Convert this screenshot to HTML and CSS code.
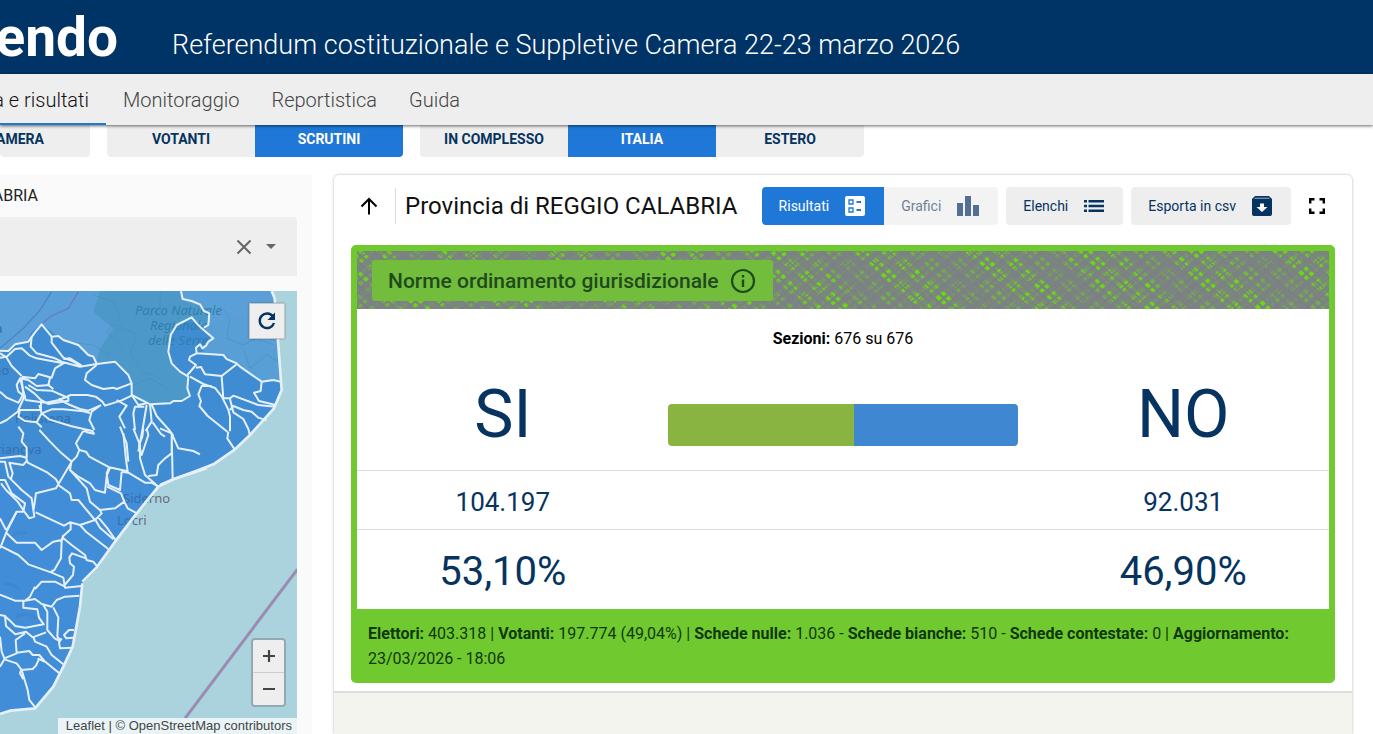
FILE: index.html
```html
<!DOCTYPE html>
<html lang="it">
<head>
<meta charset="utf-8">
<title>Eligendo</title>
<link rel="stylesheet" href="styles.css">
</head>
<body>
<header class="top">
  <div class="logo">endo</div>
  <h1 class="top-title">Referendum costituzionale e Suppletive Camera 22-23 marzo 2026</h1>
</header>
<nav class="nav">
  <a class="nav-link nav-first active" href="#">a e risultati</a>
  <a class="nav-link" href="#">Monitoraggio</a>
  <a class="nav-link" href="#">Reportistica</a>
  <a class="nav-link" href="#">Guida</a>
</nav>
<div class="filters">
  <div class="group"><button class="tab tab-cut">CAMERA</button></div>
  <div class="group"><button class="tab">VOTANTI</button><button class="tab on">SCRUTINI</button></div>
  <div class="group"><button class="tab">IN COMPLESSO</button><button class="tab on">ITALIA</button><button class="tab">ESTERO</button></div>
</div>
<main class="main">
  <aside class="side">
    <div class="crumb">CALABRIA</div>
    <div class="picker">
      <button class="icon-btn" aria-label="Cancella"><svg width="16" height="16" viewBox="0 0 16 16"><path d="M1.500 1.500l13 13M14.500 1.500l-13 13" stroke="#666" stroke-width="2"/></svg></button>
      <button class="icon-btn" aria-label="Apri"><svg width="10" height="5" viewBox="0 0 10 5"><path d="M0 0h10L5 5z" fill="#666"/></svg></button>
    </div>
    <div class="map">
      <svg class="map-art" width="297" height="443" viewBox="0 0 297 443">
        <rect width="297" height="443" fill="#abd3de"/>
        <g transform="translate(0 -6) scale(.33333)" fill="none" stroke-linejoin="round">
          <path fill="#5b9fd8" d="M0 18H815L822 40 835 180 843 285 600 400H0z"/>
          <path fill="#4c99c9" d="M300 18H545L550 45 620 70 625 120 570 97 525 130 505 180 520 240 565 275 570 330 540 350 440 355 395 330 390 280 345 230 290 236 300 190 340 130 280 80z"/>
          <path fill="#579fd4" d="M620 125L680 100 745 95 790 180 835 200 838 285 785 287 710 235 670 208 600 208 640 160z"/>
          <g stroke="#4488bd" stroke-width="3" opacity=".5"><path d="M280 30l60 20 20 50-40 40 50 50M350 120l60 30-20 60 40 50 50 20M480 20v50l-50 40M660 60l30 40-10 60 50 20 40-20 50 20M730 190l20 60 50-40 35 20M400 300l50-20 50 30M190 170l90 10 50 30"/></g>
          <path stroke="#4479b8" stroke-width="4" opacity=".7" d="M155 20L120 75 70 130 0 190"/>
          <path stroke="#6a70b8" stroke-width="4" opacity=".7" d="M235 20L205 70 150 95 125 118"/>
          <path fill="#3f8cd3" d="M0 205L25 195 45 175 80 172 95 140 125 117 175 155 235 185 280 215 290 237 345 230 385 270 395 295 395 330 440 353 510 355 545 348 570 330 562 275 515 235 505 180 525 125 575 97 640 160 610 180 610 208 670 208 710 235 785 287 840 287 845 315 822 370 750 450 705 493 640 538 590 557 520 583 480 600 440 645 395 690H0z"/>
        </g>
        <g transform="translate(0 209) scale(.33333)">
          <path fill="#428dd8" d="M0-60H480L445 0 410 40 345 125 290 207 247 250 240 320 218 440 190 500 160 560 105 625 30 632 0 642z"/>
          <path d="M892 208L555 655" stroke="#9b8bb2" stroke-width="9"/>
          <path d="M20 120q30-30 60-20M50 350q30-15 60 5M10 250q30 0 50 20" stroke="#367fbd" fill="none" stroke-width="8" opacity=".4"/>
        </g>
        <g class="places">
          <text x="135" y="24">Parco Naturale</text><text x="150" y="39">Regionale</text><text x="148" y="54">delle Serre</text>
        </g>
        <g class="towns">
          <text x="15" y="132">Polistena</text><text x="-12" y="163">urianova</text><text x="-8" y="42">ia</text><text x="-12" y="84">rno</text>
          <text x="123" y="212">Sider<tspan class="sea">no</tspan></text><text x="117" y="234">Loc<tspan class="sea">ri</tspan></text>
        </g>
        <g transform="translate(0 -6) scale(.33333)" class="borders">
          <path d="M543 18L548 42 575 48 600 58 612 78 628 85 625 120 612 128"/>
          <path class="coast" d="M815 18L824 40 835 180 843 287 845 315 822 370 750 450 705 493 640 538 590 557 520 583 480 600"/>
          <path d="M0 197L25 198 45 178 85 170 105 142 125 118 155 155 175 153 190 165 235 180 265 210 280 215 290 237 345 230 365 250 385 270 395 295 395 330 440 353 450 358 510 355 520 348 545 348 570 333 562 310 565 275 540 260 515 235 505 200 512 150 530 120 575 97 590 115 605 130 640 160 625 170 618 182 607 190 600 178 588 188 590 205 670 210 680 222 710 235 720 245 785 290 820 285 842 290"/>
          <path d="M95 155L92 185 110 205 165 220 185 230 240 245 290 237M0 218L20 215 45 192 65 190 90 212 110 220 190 235M155 155l0 18 35 45 30 12 25 15M190 222l20-2 35 22M20 218l15 25 30 30M0 205l20 12"/>
          <path d="M65 275L105 280 115 267 155 278 165 250 190 235M150 278L145 300 160 312M150 300L110 303 85 285 60 280 50 300 55 320 75 335M290 240L260 265 255 285 275 300 310 312 340 308 350 312 395 295M85 300l25 15 45 2 50 22 0 8-60 10-22-12-20-20-28-20M60 280l12 45 5 20 60 8 40-8 35-15 50 0 25 5 20 15 8 12 48-15 32-15M300 362l-35 15-25-5-30-12-35-18"/>
          <path d="M0 320l20 18 35 15 15-25-5-45M75 330l-20 45 68 0 0-22M60 375L20 405 0 415M60 375L55 395 75 408 110 412 125 385 118 360M125 385l30-12 35 0 60 6 20 5M110 412l15 15M125 385l22 18 65 20 65 15 5 8-25-5M303 360L275 380 268 405 283 435M350 345L380 362 358 395 375 430"/>
          <path d="M395 330l20 30 25-5M440 360l-10 60-15 80M405 435l-5-50 5-20 28 0M455 358l15 35 40 45 10 15M450 358l5 52-18 28M458 412l25 35 12 8"/>
          <path d="M590 205L570 215 567 225 588 240 562 270M588 248l15-2 12 22 50 5 45-35M570 275l40 22 35 12 20 25 20 40 5 20 0 45M635 303l-30 0-10 25 8 20-5 15 25 30 60 48M665 275l5 65 20 0 10-8 75 28 50 5M785 290l-3 28-20 5 15 25 50 12M690 342l10 40 30 20 15 30 5 20M690 375l10-12 30 12 25 5 20 18 25 8M685 440l-3 20 22 33"/>
        </g>
        <g transform="translate(0 139) scale(.33333)" class="borders">
          <path class="coast" d="M620 115L520 148 475 170 410 250 345 335 290 412 247 455"/>
          <path d="M55-10l15 20-5 25 15 18 0 30L60 78 0 85M78 83l5 15 60 30 25 20 8 15M82 90L70 105 28 98 38 130 32 150M0 95l15 0 10 45 20 20M40 155l25 25 30 25 8 55-15 5-15-20-20-30-35-35-15-20M0 150l15 0 20 40 40 30-5 25-20 0-30 60L0 355M0 265l18 35M100 245l8-55 60-15 50-85M118 0l32 35 35 35 30 25 15-15 8-20-10-20 20-35 20-5M238 60l20 5 10 15 60 32 55 12-5-35-8-80M215 90l-5 30 25 20 35 20 15 20 30 8 5-50 10-25M328 110l-8 20 5 35 35 15 5-55M365 125l20 3 50 30 20 0 20 12"/>
          <path d="M360-10L380 40 385 95M400-5l20 50 0 40 15 50 40 35M440-5l5 20-20 60-8-30 10-25 3-25M515 10l0 60-20 15-20 20-5 30-25 3M515 10l3 140M480-5l35 15 20 45 45 8 20 10"/>
          <path d="M175 165l35 25 5 20 20 0 50 60-45 15-30-8-18 10-85-40M210 120l50 55 10 40 30 25 45-5 28-20-10-25-42-20M373 215l10 20 28 15M285 270l20-20-5-10M285 268l15 25 40 35M295 262l25 30 28 40M240 285l20 22 65 50M212 278l0 20-22 20-5 15M20 300l30-55M20 310l30 28 55 0 20 22 35-25 25-5 5-15M185 330l-2 55-20 35-10 5M190 325l25 20 40 30 5 15 20 5 12 15M258 385l-42-15-8 12 2 18 12 10-3 25-25 30M5 350l50 25 30 28 70 25 35 15 5 30 50-5M195 470l-30-15-40 0-20 22"/>
        </g>
        <g transform="translate(0 209) scale(.33333)" class="borders">
          <path class="coast" d="M247 250L240 320 218 440 190 500 160 560 105 625 30 632 0 642"/>
          <path d="M105 260l-15 30-15 12-30 0-45-18M75 302l30-5 20 15 30 8 15-20 25-10 43-3M70 305l0 18 42 5 5 25 14 20-55 10-30-5-15-15-17-15M130 315l12 20 0 55 22 25 15 8M160 322l15 30-3 58 10 12M222 390l-15 0-15 15 7 10 20-2M185 415l-8 12 3 18 38-2"/>
          <path d="M0 345l15 3 3 30 28 25 32-8 20 17 40-15M0 410l5 45 8 20 37-15-3-40 28-20M100 410l5 15 35 15 15 25 35 28M50 458l38-5 10 12 20 0 15 18 45 37M13 478l37 12 15 20 18 60 5 30 20 25M118 475l-10 22-10 10-35 3-3 10 10 18M113 475l20 10M0 500l13-22"/>
        </g>
      </svg>
      <button class="map-btn reload" aria-label="Ricarica"><svg width="20" height="20" viewBox="0 0 20 20"><path d="M16 5.500A7.300 7.300 0 1 0 17 12" fill="none" stroke="#063360" stroke-width="2.400"/><path d="M18 1.500V9h-7.500z" fill="#063360"/></svg></button>
      <div class="zoomer"><button class="map-btn" aria-label="Ingrandisci"><svg width="14" height="14" viewBox="0 0 14 14"><path d="M1 7h12M7 1v12" stroke="#444" stroke-width="2.200"/></svg></button><button class="map-btn" aria-label="Riduci"><svg width="14" height="14" viewBox="0 0 14 14"><path d="M1 7h12" stroke="#444" stroke-width="2.200"/></svg></button></div>
      <div class="credit"><a href="#">Leaflet</a> | © <a href="#">OpenStreetMap</a> contributors</div>
    </div>
  </aside>
  <section class="card">
    <div class="bar">
      <button class="icon-btn up" aria-label="Su"><svg width="18" height="18" viewBox="0 0 18 18"><path d="M9 17.500V2M1.500 9.500L9 2l7.500 7.500" fill="none" stroke="#000" stroke-width="2"/></svg></button>
      <h2 class="place">Provincia di REGGIO CALABRIA</h2>
      <div class="tools">
        <div class="pair">
          <button class="tool tool-on">Risultati <svg width="20" height="20" viewBox="0 0 20 20"><rect width="20" height="20" rx="2" fill="#fff"/><g fill="none" stroke="#1f78d8" stroke-width="1.300"><path d="M4 4h4v4H4zM4 12h4v4H4z"/><path d="M11.500 6H16M11.500 14H16" stroke-width="1.800"/></g></svg></button>
          <button class="tool tool-off">Grafici <svg width="22" height="20" viewBox="0 0 22 20"><path d="M0 7h6v13H0zM8 0h6v20H8zM16 9h6v11h-6z" fill="#536f93"/></svg></button>
        </div>
        <button class="tool">Elenchi <svg width="20" height="12" viewBox="0 0 20 12"><path d="M0 0h3v2.500H0zM0 4.700h3v2.500H0zM0 9.400h3v2.500H0zM4.500 0H20v2.500H4.500zM4.500 4.700H20v2.500H4.500zM4.500 9.400H20v2.500H4.500z" fill="#063360"/></svg></button>
        <button class="tool">Esporta in csv <svg width="20" height="20" viewBox="0 0 20 20"><path d="M3 0h14l3 3v15a2 2 0 0 1-2 2H2a2 2 0 0 1-2-2V3z" fill="#063360"/><path d="M2.500 2.200h15" stroke="#9cb0c6" stroke-width="1"/><path d="M8 7.500h4V11h3.500L10 16l-5.500-5H8z" fill="#fff"/></svg></button>
        <button class="icon-btn full" aria-label="Schermo intero"><svg width="16" height="16" viewBox="0 0 16 16"><path d="M1.200 5.500V1.200h4.300M10.500 1.200h4.300v4.300M14.800 10.500v4.300h-4.300M5.500 14.800H1.200v-4.300" fill="none" stroke="#000" stroke-width="2.400"/></svg></button>
      </div>
    </div>
    <article class="result">
      <div class="hatch"><h3 class="chip">Norme ordinamento giurisdizionale <svg width="26" height="26" viewBox="0 0 26 26"><circle cx="13" cy="13" r="11" fill="none" stroke="#1f4a1c" stroke-width="2.200"/><path d="M13 11.500V19M13 7v2.500" stroke="#1f4a1c" stroke-width="2.400"/></svg></h3></div>
      <table class="votes">
        <caption><b>Sezioni:</b> 676 su 676</caption>
        <colgroup><col class="c-side"><col><col class="c-side"></colgroup>
        <tr class="r-name"><th>SI</th><td><div class="split"><span class="yes" style="width:53.1%"></span><span class="no"></span></div></td><th>NO</th></tr>
        <tr class="r-num"><td>104.197</td><td></td><td>92.031</td></tr>
        <tr class="r-pct"><td>53,10%</td><td></td><td>46,90%</td></tr>
      </table>
      <p class="stats"><b>Elettori:</b> 403.318 | <b>Votanti:</b> 197.774 (49,04%) | <b>Schede nulle:</b> 1.036 - <b>Schede bianche:</b> 510 - <b>Schede contestate:</b> 0 | <b>Aggiornamento:</b> 23/03/2026 - 18:06</p>
    </article>
    <div class="below"></div>
  </section>
</main>
</body>
</html>
```
FILE: styles.css
```css
* { box-sizing: border-box; }
body { margin: 0; height: 100vh; overflow: hidden; display: flex; flex-direction: column; background: #fff; font-family: Roboto, sans-serif; color: #111; }
h1, h2, h3, p { margin: 0; font-weight: 400; }
button { border: 0; padding: 0; font: inherit; color: inherit; cursor: pointer; background: none; }
a { color: inherit; text-decoration: none; }
svg { display: block; flex: none; }

.top { flex: none; height: 74px; background: #003366; color: #fff; display: flex; gap: 54px; }
.logo { width: 118px; display: flex; justify-content: flex-end; font-size: 55px; line-height: 74px; font-weight: 700; }
.top-title { font-size: 27px; line-height: 90px; height: 74px; font-weight: 300; white-space: nowrap; }

.nav { flex: none; height: 51px; background: #eee; display: flex; position: relative; z-index: 1; box-shadow: 0 1px 3px rgba(0, 0, 0, .6); color: #444; font-size: 20px; line-height: 52px; font-weight: 300; }
.nav-link { padding: 0 15px 0 17px; white-space: nowrap; }
.nav-first { width: 106px; display: flex; justify-content: flex-end; padding-right: 17px; }
.active { color: #111; border-bottom: 2px solid #1f78d8; }

.filters { flex: none; display: flex; gap: 17px; height: 32px; }
.group { display: flex; border-radius: 0 0 4px 4px; overflow: hidden; }
.tab { width: 148px; height: 32px; padding-bottom: 4px; background: #eee; color: #063360; font-size: 14px; font-weight: 700; }
.tab-cut { width: 90px; padding-right: 46px; display: flex; justify-content: flex-end; align-items: center; }
.on { background: #1f78d8; color: #fff; }

.main { flex: 1; min-height: 0; display: flex; gap: 22px; padding: 18px 21px 0 0; }
.side { flex: none; width: 312px; background: #fafafa; padding-right: 15px; display: flex; flex-direction: column; }
.crumb { width: 38px; display: flex; justify-content: flex-end; font-size: 16px; line-height: 42px; color: #222; }
.picker { flex: none; height: 59px; background: #eee; border-radius: 0 4px 0 0; display: flex; align-items: center; justify-content: flex-end; gap: 14px; padding-right: 21px; margin-bottom: 15px; }
.icon-btn { display: flex; align-items: center; justify-content: center; }
.map { flex: 1; min-height: 0; position: relative; overflow: hidden; background: #abd3de; }
.places { font: italic 13px "Noto Sans", sans-serif; fill: #2f7faa; }
.towns { font: 13px "Noto Sans", sans-serif; fill: #3570ad; }
.sea { fill: #6a6a78; }
.borders { fill: none; stroke: #e6f0fb; stroke-width: 6; stroke-linejoin: round; }
.coast { stroke-width: 8; }
.map-btn { width: 31px; height: 32px; display: flex; align-items: center; justify-content: center; background: #eee; }
.reload { position: absolute; top: 12px; right: 12px; width: 36px; height: 36px; border: 1px solid #c4c4c4; box-shadow: 0 0 2px rgba(0, 0, 0, .3); }
.zoomer { position: absolute; right: 11px; bottom: 27px; border: 2px solid #93a9b1; border-radius: 4px; overflow: hidden; background: #ccc; display: grid; gap: 1px; }
.credit { position: absolute; right: 0; bottom: 0; padding: 0 5px 0 8px; background: rgba(255, 255, 255, .75); color: #444; font: 13px/16px "Liberation Sans", Arial, sans-serif; white-space: nowrap; }

.card { flex: 1; min-width: 0; border-radius: 5px 5px 0 0; box-shadow: 0 0 3px rgba(0, 0, 0, .3); display: flex; flex-direction: column; }
.bar { display: flex; align-items: center; height: 62px; padding: 0 27px 0 26px; }
.up { padding-right: 17px; height: 36px; border-right: 1px solid #ddd; }
.place { font-size: 24px; font-weight: 400; padding-left: 9px; color: #111; white-space: nowrap; }
.tools { margin-left: auto; display: flex; gap: 8px; }
.pair { display: flex; }
.tool { height: 38px; padding: 0 19px 0 17px; border-radius: 4px; background: #eee; color: #063360; font-size: 14px; display: flex; align-items: center; gap: 16px; white-space: nowrap; }
.tool-on { background: #1f78d8; color: #fff; border-radius: 4px 0 0 4px; }
.tool-off { background: #f3f3f3; color: #6f8197; border-radius: 0 4px 4px 0; }
.full { margin-left: 10px; }

.result { margin: 8px 17px; border: 6px solid #70c92e; border-radius: 5px; background: #70c92e; }
.hatch { height: 58px; padding: 9px 15px; background:
  repeating-linear-gradient(40deg, rgba(124, 128, 134, .9) 0 2px, transparent 3px 6px, rgba(124, 128, 134, .9) 7px 8px, transparent 9px 12px, rgba(124, 128, 134, .8) 13px 18px),
  repeating-linear-gradient(50deg, rgba(124, 128, 134, .6) 0 2px, transparent 3px 7px),
  repeating-linear-gradient(-38deg, rgba(124, 128, 134, .9) 0 2px, transparent 3px 6px, rgba(124, 128, 134, .9) 7px 8px, transparent 9px 13px, rgba(124, 128, 134, .8) 14px 17px),
  repeating-linear-gradient(-47deg, rgba(124, 128, 134, .6) 0 2px, transparent 3px 8px),
  repeating-linear-gradient(43deg, rgba(124, 128, 134, .5) 0 22px, transparent 28px 60px, rgba(124, 128, 134, .5) 66px 71px),
  #6cd812; }
.chip { width: fit-content; height: 41px; padding: 0 17px 0 16px; border-radius: 3px; background: #72be3c; color: #1f4a1c; display: flex; align-items: center; gap: 11px; font-size: 21px; font-weight: 500; white-space: nowrap; }
.votes { width: 100%; background: #fff; border-collapse: collapse; table-layout: fixed; color: #063360; text-align: center; }
.votes caption { background: #fff; color: #000; font-size: 16px; line-height: 60px; }
.votes th, .votes td { padding: 0; font-weight: 400; }
.c-side { width: 30%; }
.r-name { height: 101px; border-bottom: 1px solid #ddd; }
.votes .r-name th { font-size: 66px; line-height: 92px; font-weight: 400; vertical-align: top; }
.split { margin: 12px auto 0; width: 90%; height: 42px; border-radius: 4px; overflow: hidden; display: flex; }
.yes { background: #8ab441; }
.no { flex: 1; background: #3f87d0; }
.r-num { height: 59px; font-size: 26px; border-bottom: 1px solid #ddd; }
.r-pct { height: 80px; font-size: 40px; }
.votes .r-num td, .votes .r-pct td { padding-top: 4px; }
.stats { padding: 12px 11px 6px; font-size: 16px; line-height: 25px; color: #10380c; }
.below { flex: 1; background: #f3f4ee; border-top: 2px solid #ddd; }
```
